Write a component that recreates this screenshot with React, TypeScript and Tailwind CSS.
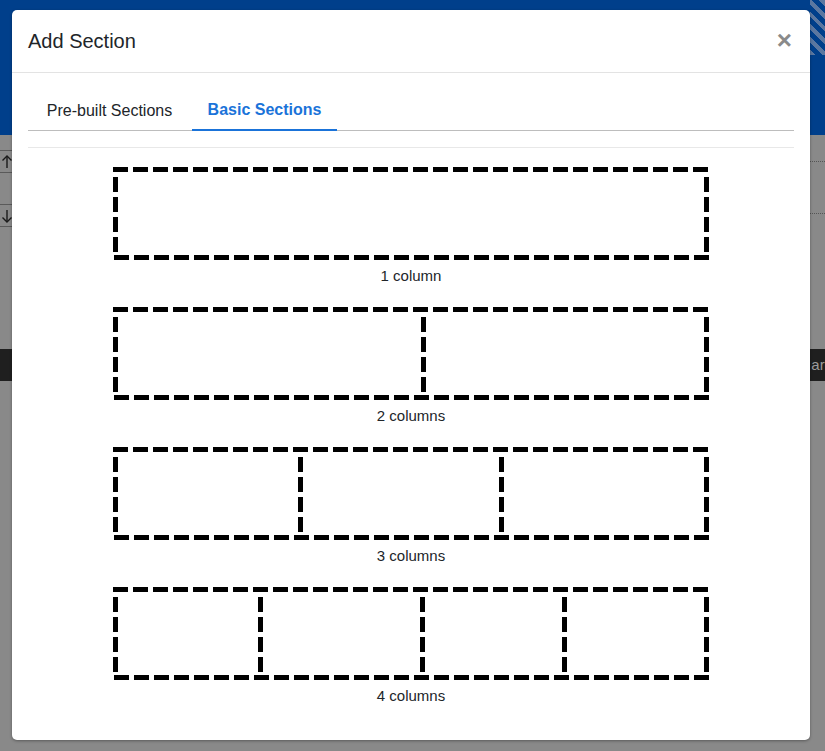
import React from 'react';

const layouts: { label: string; dividers: number[] }[] = [
  { label: '1 column', dividers: [] },
  { label: '2 columns', dividers: [308] },
  { label: '3 columns', dividers: [185, 386] },
  { label: '4 columns', dividers: [145, 307, 449] },
];

// dashed preview of a section layout
function LayoutPreview({ dividers }: { dividers: number[] }) {
  const dash = '15 5';
  return (
    <svg width="596" height="93" viewBox="0 0 596 93" shapeRendering="crispEdges">
      <g stroke="#000" strokeWidth="5" strokeDasharray={dash}>
        <line x1="0" y1="2.5" x2="596" y2="2.5" />
        <line x1="1" y1="90.5" x2="596" y2="90.5" />
        <line x1="2.5" y1="10" x2="2.5" y2="86" />
        <line x1="593.5" y1="10" x2="593.5" y2="86" />
        {dividers.map((x) => (
          <line key={x} x1={x + 2.5} y1="10" x2={x + 2.5} y2="86" />
        ))}
      </g>
    </svg>
  );
}

function SectionOption({ label, dividers }: { label: string; dividers: number[] }) {
  return (
    <div className="flex flex-col items-center mb-[21px] cursor-pointer">
      <LayoutPreview dividers={dividers} />
      <div className="mt-[6px] h-[20px] leading-[20px] text-[15px] text-[#212529]">{label}</div>
    </div>
  );
}

function Arrow({ down }: { down?: boolean }) {
  return (
    <svg width="12" height="14" viewBox="0 0 12 14" fill="none" stroke="#1a1a1a" strokeWidth="1.4">
      {down ? (
        <>
          <path d="M7 1v12" />
          <path d="M2.5 8.5L7 13l4.5-4.5" />
        </>
      ) : (
        <>
          <path d="M7 13V1" />
          <path d="M2.5 5.5L7 1l4.5 4.5" />
        </>
      )}
    </svg>
  );
}

export default function App() {
  return (
    <div
      className="relative w-full h-screen overflow-hidden bg-[#898989]"
      style={{ fontFamily: '"Liberation Sans", Arial, sans-serif' }}
    >
      {/* page behind the modal */}
      <div className="h-[135px] bg-[#003f8b] flex justify-end">
        <div className="w-[15px] h-[55px] bg-[repeating-linear-gradient(45deg,#5b77a0_0_4px,#003f8b_4px_9px)]" />
      </div>
      <div className="flex justify-between pt-[15px]">
        <div className="flex flex-col">
          <div className="w-[12px] h-[23px] border-y border-[#5a5a5a] flex items-center">
            <Arrow />
          </div>
          <div className="w-[12px] h-[23px] mt-[31px] border-y border-[#5a5a5a] flex items-center">
            <Arrow down />
          </div>
        </div>
        <div className="flex flex-col w-[15px]">
          <div className="mt-[11px] border-t border-dotted border-[#555]" />
          <div className="mt-[51px] border-t border-dotted border-[#555]" />
        </div>
      </div>
      <div className="mt-[122px] h-[32px] bg-[#1f1f1f] flex justify-end items-center overflow-hidden">
        <span className="text-[15px] text-[#9a9a9a] -mr-[8px]">ard</span>
      </div>

      {/* modal */}
      <div className="absolute inset-0 pl-[12px] pt-[10px]">
        <div className="w-[798px] h-[730px] bg-white rounded-[5px] shadow-[0_1px_3px_rgba(0,0,0,0.35)] flex flex-col">
          <div className="h-[63px] flex items-center justify-between px-[16px] border-b border-[#e3e3e3]">
            <h5 className="text-[20px] leading-[30px] text-[#212529]">Add Section</h5>
            <button className="text-[26px] leading-none font-bold text-[#8a8a8a] mr-[2px] -mt-[2px]">×</button>
          </div>
          <div className="px-[16px] pt-[16px] flex flex-col">
            <div className="flex border-b border-[#bdbdbd] h-[42px]">
              <div className="w-[164px] flex items-center justify-center text-[16px] text-[#212529] pt-[2px] pr-[1px]">Pre-built Sections</div>
              <div className="w-[145px] flex items-center justify-center text-[16px] font-bold text-[#1a73d9] border-b-2 border-[#1a73d9] -mb-[1px] pt-[2px]">
                Basic Sections
              </div>
            </div>
            <div className="mt-[16px] border-t border-[#e8e8e8]" />
            <div className="pt-[19px] flex flex-col">
              {layouts.map((l) => (
                <SectionOption key={l.label} label={l.label} dividers={l.dividers} />
              ))}
            </div>
          </div>
        </div>
      </div>
    </div>
  );
}
